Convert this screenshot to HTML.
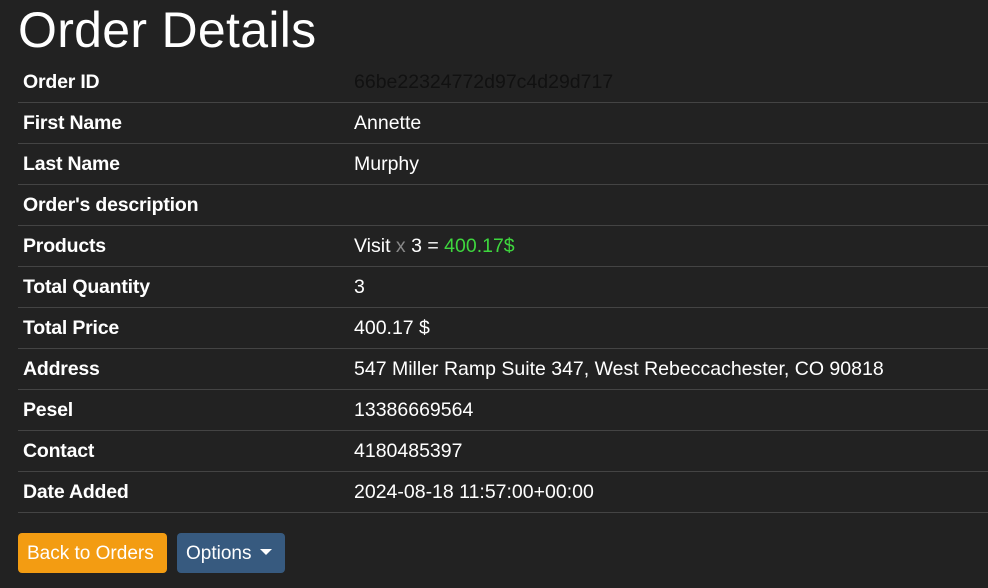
<!DOCTYPE html>
<html><head><meta charset="utf-8"><style>
html,body{margin:0;padding:0;background:#222;width:988px;height:588px;overflow:hidden;font-family:"Liberation Sans",sans-serif;color:#fff}
h1{position:absolute;left:18px;top:1px;margin:0;font-weight:400;font-size:50px;line-height:58px;letter-spacing:0.3px}
table{position:absolute;left:18px;top:61px;width:970px;border-collapse:collapse;table-layout:fixed;font-size:19.5px}
td{height:41px;padding:2px 5px 0;box-sizing:border-box;border-bottom:1px solid #444;vertical-align:middle}
tr{height:41px}
td.l{font-weight:700;letter-spacing:-0.2px}
.btn{position:absolute;top:533px;height:40px;border-radius:4px;font-size:19px;line-height:42px;color:#fff;box-sizing:border-box}
</style></head><body>
<h1>Order Details</h1>
<table>
<colgroup><col style="width:331px"><col></colgroup>
<tr><td class="l">Order ID</td><td style="color:#111">66be22324772d97c4d29d717</td></tr>
<tr><td class="l">First Name</td><td>Annette</td></tr>
<tr><td class="l">Last Name</td><td>Murphy</td></tr>
<tr><td class="l">Order's description</td><td></td></tr>
<tr><td class="l">Products</td><td>Visit <span style="color:#888">x</span> 3 = <span style="color:#3ed63e">400.17$</span></td></tr>
<tr><td class="l">Total Quantity</td><td>3</td></tr>
<tr><td class="l">Total Price</td><td>400.17 $</td></tr>
<tr><td class="l">Address</td><td>547 Miller Ramp Suite 347, West Rebeccachester, CO 90818</td></tr>
<tr><td class="l">Pesel</td><td>13386669564</td></tr>
<tr><td class="l">Contact</td><td>4180485397</td></tr>
<tr><td class="l">Date Added</td><td>2024-08-18 11:57:00+00:00</td></tr>
</table>
<div class="btn" style="left:18px;width:149px;background:#f39c12;padding-left:9px">Back to Orders</div>
<div class="btn" style="left:177px;width:108px;background:#375a7f;padding-left:9px">Options <span style="display:inline-block;width:0;height:0;border-left:6px solid transparent;border-right:6px solid transparent;border-top:6px solid #fff;vertical-align:middle;margin-left:3px;position:relative;top:-2px"></span></div>
</body></html>
